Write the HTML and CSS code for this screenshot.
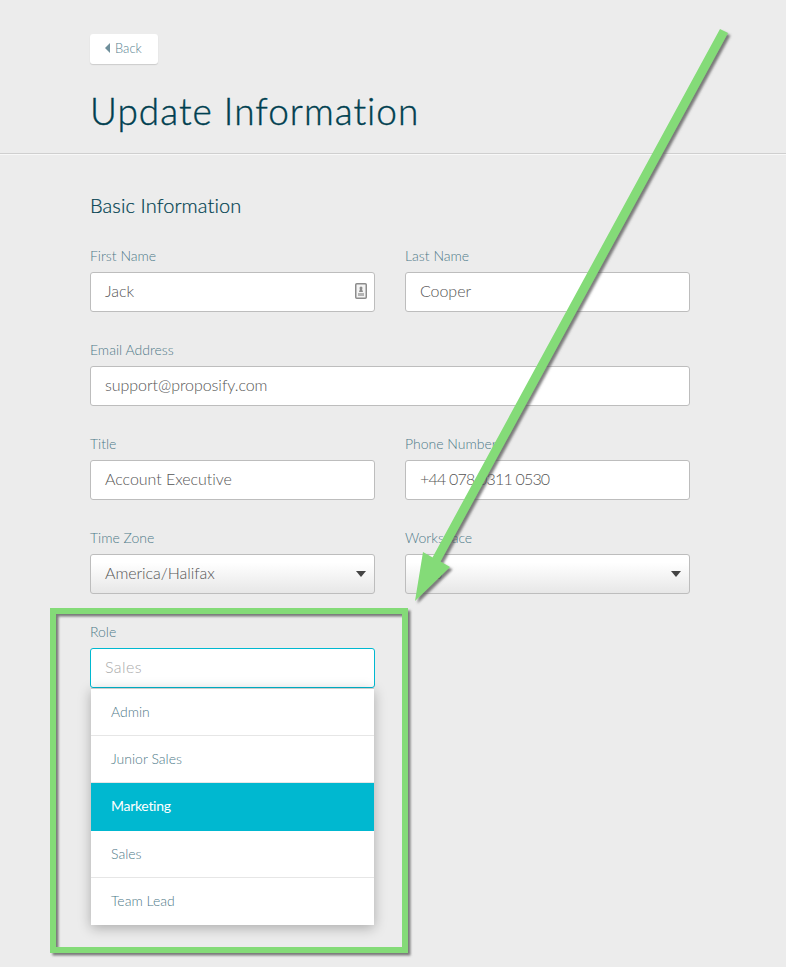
FILE: index.html
```html
<!DOCTYPE html>
<html lang="en">
<head>
    <meta charset="UTF-8">
    <meta name="viewport" content="width=device-width, initial-scale=1.0">
    <title>Update Information</title>
    <link rel="stylesheet" href="styles.css">
</head>
<body>
    <header class="page-header">
        <a class="back-button" href="#"><span class="back-arrow"></span>Back</a>
        <h1>Update Information</h1>
    </header>
    <main class="form-wrap">
        <h2>Basic Information</h2>
        <div class="form-grid">
            <div class="field">
                <label>First Name</label>
                <div class="input-box">
                    <span>Jack</span>
                    <!-- contact card icon -->
                    <svg class="card-icon" width="12" height="16" viewBox="0 0 12 16">
                        <rect x="0.75" y="0.75" width="10.5" height="14.5" rx="1" fill="#f4f4f4" stroke="#8c8c8c" stroke-width="1.5"/>
                        <circle cx="6" cy="5" r="1.5" fill="#8c8c8c"/>
                        <path d="M5 6h2l1 3H4z" fill="#8c8c8c"/>
                        <rect x="3" y="10" width="6" height="3" fill="#b4b4b4"/>
                    </svg>
                </div>
            </div>
            <div class="field">
                <label>Last Name</label>
                <div class="input-box"><span>Cooper</span></div>
            </div>
            <div class="field wide">
                <label>Email Address</label>
                <div class="input-box"><span>support@proposify.com</span></div>
            </div>
            <div class="field">
                <label>Title</label>
                <div class="input-box"><span>Account Executive</span></div>
            </div>
            <div class="field">
                <label>Phone Number</label>
                <div class="input-box"><span class="phone-value">+44 078 0311 0530</span></div>
            </div>
            <div class="field">
                <label>Time Zone</label>
                <div class="input-box select-box"><span>America/Halifax</span><i class="caret"></i></div>
            </div>
            <div class="field">
                <label>Workspace</label>
                <div class="input-box select-box"><span>Bio</span><i class="caret"></i></div>
            </div>
            <div class="field role-field">
                <label>Role</label>
                <div class="input-box focused"><span class="placeholder">Sales</span></div>
                <ul class="role-menu">
                    <li>Admin</li>
                    <li>Junior Sales</li>
                    <li class="active">Marketing</li>
                    <li>Sales</li>
                    <li>Team Lead</li>
                </ul>
            </div>
        </div>
    </main>
    <!-- green annotation drawn on top of the screenshot -->
    <svg class="annotation" width="786" height="967" viewBox="0 0 786 967">
        <defs>
            <filter id="mark-shadow" x="-10%" y="-10%" width="120%" height="120%">
                <feDropShadow dx="2.5" dy="2.5" stdDeviation="1.2" flood-color="#555" flood-opacity="0.75"/>
            </filter>
        </defs>
        <g filter="url(#mark-shadow)" fill="#84db78">
            <polygon points="720,29 728,33 440.5,561.6 450,567 415,601 423,552 432.5,557.4"/>
            <path fill-rule="evenodd" d="M50 608H408V953H50ZM56 614V947H402V614Z"/>
        </g>
    </svg>
</body>
</html>
```

FILE: styles.css
```css
/* Basic page */
html, body {
    height: 967px;
    overflow: hidden;
}
body {
    margin: 0;
    position: relative;
    background-color: #ececec;
    font-family: "Lato", "Liberation Sans", sans-serif;
    color: #555;
}
.page-header {
    height: 154px;
    padding: 34px 0 0 90px;
    box-sizing: border-box;
    border-bottom: 1px solid #cfcfcf;
    box-shadow: 0 1px 0 #f8f8f8;
}
.back-button {
    display: flex;
    align-items: center;
    width: 68px;
    height: 30px;
    padding: 0 0 2px 15px;
    box-sizing: border-box;
    background-color: #fff;
    border-radius: 3px;
    box-shadow: 0 1px 1px #ccc;
    font-size: 13px;
    font-weight: 300;
    color: #56808f;
    text-decoration: none;
}
.back-arrow {
    width: 0;
    height: 0;
    margin-right: 5px;
    border-top: 5px solid transparent;
    border-bottom: 5px solid transparent;
    border-right: 5px solid #6f8f9b;
}
h1 {
    margin: 24px 0 0;
    font-size: 37px;
    line-height: 46px;
    font-weight: 300;
    letter-spacing: 1px;
    color: #003f50;
    -webkit-text-stroke: 0.4px #003f50;
}
.form-wrap {
    width: 600px;
    margin-left: 90px;
}
h2 {
    margin: 39px 0 0;
    font-size: 20px;
    line-height: 24px;
    font-weight: 300;
    letter-spacing: 0.1px;
    color: #003f50;
    -webkit-text-stroke: 0.2px #003f50;
}
.form-grid {
    display: grid;
    grid-template-columns: 285px 285px;
    column-gap: 30px;
    row-gap: 14px;
    margin-top: 31px;
}
.field {
    height: 80px;
}
.field.wide {
    grid-column: 1 / 3;
}
.field label {
    display: block;
    height: 24px;
    font-size: 14px;
    line-height: 16px;
    font-weight: 300;
    color: #4f7a89;
}
.input-box {
    position: relative;
    display: flex;
    align-items: center;
    height: 40px;
    padding: 0 14px 3px;
    box-sizing: border-box;
    background-color: #fff;
    border: 1px solid #bdbdbd;
    border-radius: 3px;
    font-size: 16px;
    font-weight: 300;
    letter-spacing: -0.05px;
}
.phone-value {
    letter-spacing: -0.8px;
}
.card-icon {
    position: absolute;
    right: 7px;
    top: 10px;
}
.select-box {
    justify-content: space-between;
    background: linear-gradient(#fff 20%, #e7e7e7);
}
.caret {
    width: 0;
    height: 0;
    margin-top: 3px;
    margin-right: -6px;
    border-left: 5.5px solid transparent;
    border-right: 5.5px solid transparent;
    border-top: 6px solid #444;
}
.role-field {
    position: relative;
}
.focused {
    border-color: #00b8d0;
}
.placeholder {
    color: #aaa;
    letter-spacing: 0.4px;
}
.role-menu {
    position: absolute;
    left: 1px;
    top: 64px;
    width: 283px;
    margin: 0;
    padding: 0;
    list-style: none;
    background-color: #fff;
    border-top: 1px solid #ccc;
    box-shadow: 0 3px 12px rgba(0, 0, 0, 0.28);
}
.role-menu li {
    height: 47px;
    box-sizing: border-box;
    line-height: 46px;
    padding-left: 20px;
    border-bottom: 1px solid #e6e6e6;
    font-size: 14px;
    font-weight: 300;
    color: #4f7a89;
}
.role-menu li:last-child {
    border-bottom: 0;
}
.role-menu li.active {
    height: 48px;
    border-bottom: 0;
    background-color: #00b8d0;
    font-weight: 400;
    letter-spacing: -0.3px;
    color: #fff;
}
.annotation {
    position: absolute;
    left: 0;
    top: 0;
}
```
